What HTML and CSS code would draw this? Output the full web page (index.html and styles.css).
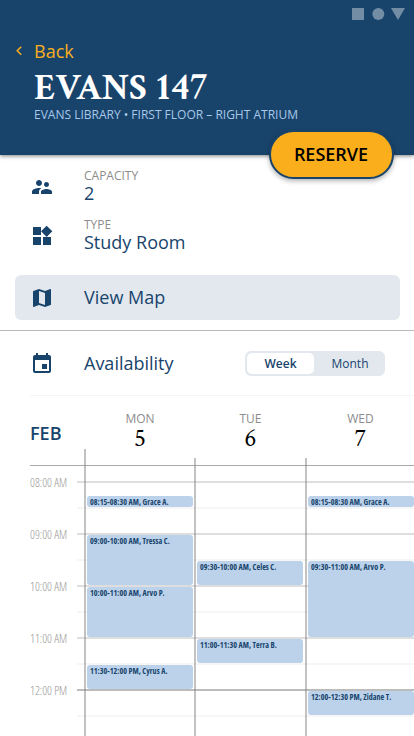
FILE: index.html
```html
<!DOCTYPE html>
<html lang="en">
<head>
<meta charset="utf-8">
<meta name="viewport" content="width=device-width, initial-scale=1">
<title>Evans 147</title>
<link rel="stylesheet" href="styles.css">
</head>
<body>
<div class="screen">
  <header class="header">
    <div class="status">
      <svg width="54" height="14" viewBox="0 0 54 14"><path d="M0 1h12v12H0z"/><circle cx="26.3" cy="7" r="6"/><path d="M39 1h14l-7 12z"/></svg>
    </div>
    <a class="back"><svg width="6" height="10" viewBox="0 0 6 10"><path d="M5.2.8 1.2 4.8l4 4"/></svg><span>Back</span></a>
    <h1 class="title">EVANS <span class="number">147</span></h1>
    <p class="location">EVANS LIBRARY • FIRST FLOOR – RIGHT ATRIUM</p>
    <button class="reserve">RESERVE</button>
  </header>

  <section class="details">
    <div class="detail">
      <svg class="icon" viewBox="0 0 24 24"><path d="M16.5 12c1.38 0 2.49-1.12 2.49-2.5S17.88 7 16.5 7 14 8.12 14 9.5s1.12 2.5 2.5 2.5zM9 11c1.66 0 2.99-1.34 2.99-3S10.66 5 9 5 6 6.34 6 8s1.34 3 3 3zm7.500 3c-1.830 0-5.500.920-5.500 2.750V19h11v-2.250c0-1.830-3.670-2.750-5.500-2.750zM9 13c-2.330 0-7 1.170-7 3.500V19h7v-2.250c0-.850.330-2.340 2.370-3.470C10.500 13.100 9.660 13 9 13z"/></svg>
      <div><div class="label">CAPACITY</div><div class="value">2</div></div>
    </div>
    <div class="detail">
      <svg class="icon" viewBox="0 0 24 24"><path d="M13 13v8h8v-8h-8zM3 21h8v-8H3v8zM3 3v8h8V3H3zm13.660-1.310L11 7.340 16.660 13l5.660-5.660-5.660-5.650z"/></svg>
      <div><div class="label">TYPE</div><div class="value">Study Room</div></div>
    </div>
    <a class="map">
      <svg class="icon" viewBox="0 0 24 24"><path d="m20.500 3-.160.030L15 5.100 9 3 3.360 4.900c-.210.070-.360.250-.360.480V20.500c0 .280.220.500.500.500l.160-.030L9 18.900l6 2.100 5.640-1.900c.210-.070.360-.250.360-.480V3.500c0-.280-.220-.500-.500-.500zM15 19l-6-2.110V5l6 2.110V19z"/></svg>
      <span class="value">View Map</span>
    </a>
  </section>

  <section class="availability">
    <div class="bar">
      <svg class="icon" viewBox="0 0 24 24"><path d="M17 12h-5v5h5v-5zM16 1v2H8V1H6v2H5c-1.110 0-1.990.900-1.990 2L3 19c0 1.100.890 2 2 2h14c1.100 0 2-.900 2-2V5c0-1.100-.900-2-2-2h-1V1h-2zm3 18H5V8h14v11z"/></svg>
      <span class="value">Availability</span>
      <div class="toggle"><span class="option active">Week</span><span class="option">Month</span></div>
    </div>

    <div class="days">
      <div class="month">FEB</div>
      <div class="day"><span class="label">MON</span><span class="date">5</span></div>
      <div class="day"><span class="label">TUE</span><span class="date">6</span></div>
      <div class="day"><span class="label">WED</span><span class="date">7</span></div>
    </div>

    <div class="calendar">
      <div class="times"><span>08:00 AM</span><span>09:00 AM</span><span>10:00 AM</span><span>11:00 AM</span><span>12:00 PM</span></div>
      <div class="lines"><i></i><i></i><i></i><i></i><i class="noon"></i></div>
      <div class="column mon">
        <div class="event quarter q1">08:15-08:30 AM, Grace A.</div>
        <div class="event hour q4">09:00-10:00 AM, Tressa C.</div>
        <div class="event hour q8">10:00-11:00 AM, Arvo P.</div>
        <div class="event half q14">11:30-12:00 PM, Cyrus A.</div>
      </div>
      <div class="column tue">
        <div class="event half q6">09:30-10:00 AM, Celes C.</div>
        <div class="event half q12">11:00-11:30 AM, Terra B.</div>
      </div>
      <div class="column wed">
        <div class="event quarter q1">08:15-08:30 AM, Grace A.</div>
        <div class="event long q6">09:30-11:00 AM, Arvo P.</div>
        <div class="event half q16">12:00-12:30 PM, Zidane T.</div>
      </div>
    </div>
  </section>
</div>
</body>
</html>
```

FILE: styles.css
```css
* { box-sizing: border-box; }
body { margin: 0; background: #fff; font-family: "Open Sans", "Noto Sans", sans-serif; color: #18446c; }
.screen { width: 414px; height: 736px; overflow: hidden; }

.header { position: relative; height: 155px; background: #18446c; box-shadow: 0 1px 4px rgba(0,0,0,.5); }
.status { display: flex; justify-content: flex-end; padding: 7px 8px 0 0; height: 38px; }
.status svg { fill: #738da5; }
.back { display: flex; align-items: center; gap: 12px; height: 26px; padding-left: 16px; color: #fbae1c; font-size: 18px; line-height: 26px; }
.back svg { fill: none; stroke: #fbae1c; stroke-width: 1.5; }
.title { height: 40px; margin: 3px 0 0 34px; color: #fff; font: bold 36.5px/42px "Crimson Text", "Liberation Serif", serif; white-space: nowrap; word-spacing: 2px; }
.number { font-size: 38px; line-height: 1; letter-spacing: .7px; }
.location { margin: 0 0 0 34px; color: #a9c8e8; font-size: 12px; line-height: 16px; white-space: nowrap; }
.reserve { position: absolute; left: 269px; top: 130px; width: 125px; height: 49px; padding: 0 1px 1px 0; border: 2px solid #18446c; border-radius: 25px; background: #fbae1c; color: #000; font: 600 18px/44px "Open Sans", sans-serif; box-shadow: 0 2px 5px rgba(0,0,0,.3); }

.icon { width: 24px; height: 24px; flex: none; fill: #18446c; }
.label { color: #8c8c8c; font-size: 12px; line-height: 16px; }
.value { font-size: 18px; line-height: 20px; }
.details { height: 176px; padding: 13px 14px 0 15px; border-bottom: 1px solid #bbb; }
.detail { display: flex; align-items: center; gap: 30px; height: 36px; margin: 0 0 13px 15px; }
.detail .icon { margin-top: 1px; }
.detail .value { height: 20px; line-height: 18px; }
.map { display: flex; align-items: center; gap: 30px; height: 45px; margin-top: 22px; padding-left: 15px; border-radius: 6px; background: #e3e8ef; }
.map .icon { margin-top: 1px; }
.map .value { margin-bottom: 1px; }

.bar { display: flex; align-items: center; height: 65px; margin-left: 30px; padding-right: 29px; border-bottom: 1px solid #f4f4f4; }
.bar .icon { margin-top: 2px; }
.bar .value { margin-left: 30px; }
.toggle { display: flex; width: 140px; height: 25px; margin-left: auto; padding: 2px; border-radius: 6px; background: #e3e8ef; font-size: 12px; line-height: 21px; text-align: center; }
.option { flex: 1; padding-left: 3px; }
.option.active { flex: 0 0 67px; padding-left: 0; border-radius: 5px; background: #fff; font-weight: 600; }

.days { display: grid; grid-template-columns: 55px 110px 111px 109px; height: 69px; margin-left: 30px; padding-top: 15px; }
.month { padding-top: 10px; font-size: 18px; line-height: 24px; font-weight: 600; }
.day { display: flex; flex-direction: column; align-items: center; }
.date { color: #000; font: 25px/24px "Crimson Text", "Liberation Serif", serif; }

.calendar { display: grid; grid-template-columns: 47px 7px 111px 110px 109px; grid-template-rows: 287px; margin: -16px 0 0 30px; background: linear-gradient(#aaa, #aaa) 0 16px / 100% 1px no-repeat; }
.times { grid-area: 1 / 1; display: flex; flex-direction: column; padding-top: 24px; color: #999; font-size: 12px; font-weight: 300; font-stretch: 75%; line-height: 20px; white-space: nowrap; }
.times span { height: 52px; }
.lines { grid-area: 1 / 2 / 2 / 6; padding-top: 32px; }
.lines i { display: block; height: 52px; border-top: 2px solid #dedede; background: linear-gradient(#f6f6f6, #f6f6f6) 0 24px / 100% 2px no-repeat; }
.lines .noon { border-color: #bcbcbc; }
.column { display: grid; grid-template-rows: repeat(20, 13px); align-content: start; padding: 34px 2px 0 1px; background: linear-gradient(rgba(128,128,128,.48), rgba(128,128,128,.48)) 0 9px / 2px 100% no-repeat; }
.mon { grid-area: 1 / 3; background-position: 0 0; }
.tue { grid-area: 1 / 4; margin-left: -1px; }
.wed { grid-area: 1 / 5; padding-right: 0; }
.event { margin: 0 0 2px 2px; padding-left: 3px; overflow: hidden; border-radius: 3px; background: #bbd2ea; color: #18446c; font-size: 8px; font-weight: 700; font-stretch: 75%; letter-spacing: .04px; line-height: 12px; white-space: nowrap; }
.quarter { grid-row-end: span 1; }
.half { grid-row-end: span 2; }
.hour { grid-row-end: span 4; }
.long { grid-row-end: span 6; }
.q1 { grid-row-start: 2; }
.q4 { grid-row-start: 5; }
.q6 { grid-row-start: 7; }
.q8 { grid-row-start: 9; }
.q12 { grid-row-start: 13; }
.q14 { grid-row-start: 15; }
.q16 { grid-row-start: 17; }
```
